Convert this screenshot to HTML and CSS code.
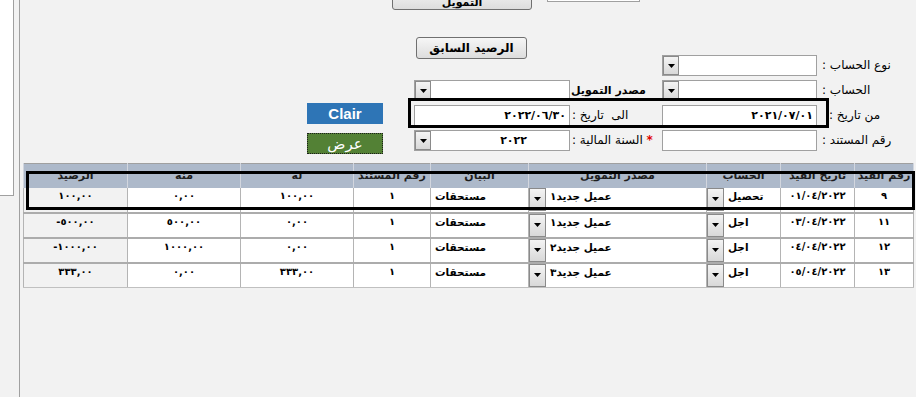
FILE: index.html
```html
<!DOCTYPE html>
<html lang="ar">
<head>
    <meta charset="UTF-8">
    <meta name="viewport" content="width=device-width, initial-scale=1.0">
    <title>كشف حساب التمويل</title>
    <link rel="stylesheet" href="styles.css">
</head>
<body>
    <div class="page">
        <div class="side"></div>
        <div class="main">
            <div class="top-bar">
                <button class="btn top-btn">التمويل</button>
                <div class="top-input"></div>
            </div>

            <div class="form" dir="rtl">
                <label class="lbl">نوع الحساب :</label>
                <div class="combo"><span class="cbtn"><svg width="7" height="4" viewBox="0 0 7 4"><path d="M0 0H7L3.5 4Z"/></svg></span><span class="cval"></span></div>
                <span></span>
                <button class="btn prev-btn">الرصيد السابق</button>
                <span></span>

                <label class="lbl">الحساب :</label>
                <div class="combo"><span class="cbtn"><svg width="7" height="4" viewBox="0 0 7 4"><path d="M0 0H7L3.5 4Z"/></svg></span><span class="cval"></span></div>
                <label class="lbl lbl2 lbl-bold">مصدر التمويل</label>
                <div class="combo"><span class="cbtn"><svg width="7" height="4" viewBox="0 0 7 4"><path d="M0 0H7L3.5 4Z"/></svg></span><span class="cval"></span></div>
                <span></span>

                <label class="lbl lbl-from">من تاريخ :</label>
                <div class="field date">٢٠٢١/٠٧/٠١</div>
                <label class="lbl lbl2">الى&nbsp; تاريخ :</label>
                <div class="field date">٢٠٢٢/٠٦/٣٠</div>
                <button class="btn-clair">Clair</button>

                <label class="lbl">رقم المستند :</label>
                <div class="field"></div>
                <label class="lbl lbl2"><span class="req">*</span> السنة المالية :</label>
                <div class="combo"><span class="cbtn"><svg width="7" height="4" viewBox="0 0 7 4"><path d="M0 0H7L3.5 4Z"/></svg></span><span class="cval year">٢٠٢٢</span></div>
                <button class="btn-show">عرض</button>

                <div class="mark mark-dates"></div>
            </div>

            <div class="grid-wrap">
                <table dir="rtl">
                    <colgroup>
                        <col style="width:59px">
                        <col style="width:74px">
                        <col style="width:74px">
                        <col style="width:178px">
                        <col style="width:98px">
                        <col style="width:77px">
                        <col style="width:113px">
                        <col style="width:113px">
                        <col style="width:104px">
                    </colgroup>
                    <thead>
                        <tr>
                            <th>رقم القيد</th>
                            <th>تاريخ القيد</th>
                            <th>الحساب</th>
                            <th>مصدر التمويل</th>
                            <th>البيان</th>
                            <th>رقم المستند</th>
                            <th>له</th>
                            <th>منه</th>
                            <th>الرصيد</th>
                        </tr>
                    </thead>
                    <tbody>
                        <tr>
                            <td class="num">٩</td>
                            <td class="num">٠١/٠٤/٢٠٢٢</td>
                            <td class="pick"><div class="cell-combo"><span class="cbtn"><svg width="7" height="4" viewBox="0 0 7 4"><path d="M0 0H7L3.5 4Z"/></svg></span><span class="ctext">تحصيل</span></div></td>
                            <td class="pick"><div class="cell-combo"><span class="cbtn"><svg width="7" height="4" viewBox="0 0 7 4"><path d="M0 0H7L3.5 4Z"/></svg></span><span class="ctext">عميل جديد١</span></div></td>
                            <td class="desc">مستحقات</td>
                            <td class="num">١</td>
                            <td class="num">١٠٠,٠٠</td>
                            <td class="num">٠,٠٠</td>
                            <td class="num bal">١٠٠,٠٠</td>
                        </tr>
                        <tr>
                            <td class="num">١١</td>
                            <td class="num">٠٣/٠٤/٢٠٢٢</td>
                            <td class="pick"><div class="cell-combo"><span class="cbtn"><svg width="7" height="4" viewBox="0 0 7 4"><path d="M0 0H7L3.5 4Z"/></svg></span><span class="ctext">اجل</span></div></td>
                            <td class="pick"><div class="cell-combo"><span class="cbtn"><svg width="7" height="4" viewBox="0 0 7 4"><path d="M0 0H7L3.5 4Z"/></svg></span><span class="ctext">عميل جديد١</span></div></td>
                            <td class="desc">مستحقات</td>
                            <td class="num">١</td>
                            <td class="num">٠,٠٠</td>
                            <td class="num">٥٠٠,٠٠</td>
                            <td class="num bal"><bdi dir="ltr">-٥٠٠,٠٠</bdi></td>
                        </tr>
                        <tr>
                            <td class="num">١٢</td>
                            <td class="num">٠٤/٠٤/٢٠٢٢</td>
                            <td class="pick"><div class="cell-combo"><span class="cbtn"><svg width="7" height="4" viewBox="0 0 7 4"><path d="M0 0H7L3.5 4Z"/></svg></span><span class="ctext">اجل</span></div></td>
                            <td class="pick"><div class="cell-combo"><span class="cbtn"><svg width="7" height="4" viewBox="0 0 7 4"><path d="M0 0H7L3.5 4Z"/></svg></span><span class="ctext">عميل جديد٢</span></div></td>
                            <td class="desc">مستحقات</td>
                            <td class="num">١</td>
                            <td class="num">٠,٠٠</td>
                            <td class="num">١٠٠٠,٠٠</td>
                            <td class="num bal"><bdi dir="ltr">-١٠٠٠,٠٠</bdi></td>
                        </tr>
                        <tr>
                            <td class="num">١٣</td>
                            <td class="num">٠٥/٠٤/٢٠٢٢</td>
                            <td class="pick"><div class="cell-combo"><span class="cbtn"><svg width="7" height="4" viewBox="0 0 7 4"><path d="M0 0H7L3.5 4Z"/></svg></span><span class="ctext">اجل</span></div></td>
                            <td class="pick"><div class="cell-combo"><span class="cbtn"><svg width="7" height="4" viewBox="0 0 7 4"><path d="M0 0H7L3.5 4Z"/></svg></span><span class="ctext">عميل جديد٣</span></div></td>
                            <td class="desc">مستحقات</td>
                            <td class="num">١</td>
                            <td class="num">٣٣٣,٠٠</td>
                            <td class="num">٠,٠٠</td>
                            <td class="num bal">٣٣٣,٠٠</td>
                        </tr>
                    </tbody>
                </table>
                <div class="mark mark-row"></div>
            </div>
        </div>
    </div>
</body>
</html>
```

FILE: styles.css
```css
* {
    box-sizing: border-box;
}
body {
    margin: 0;
    background: #f2f2f2;
    font-family: "DejaVu Sans", sans-serif;
    color: #000;
    overflow: hidden;
}
.page {
    display: flex;
    height: 397px;
}
.side {
    flex: none;
    width: 14px;
    height: 196px;
    background: #fff;
    border-right: 1px solid #a0a0a0;
    border-bottom: 1px solid #a0a0a0;
}
.main {
    flex: 1;
    margin-left: 5px;
    border-left: 1px solid #a0a0a0;
}

/* top strip, scrolled half out of view */
.top-bar {
    display: flex;
    align-items: flex-end;
    height: 10px;
    padding-left: 372px;
}
.btn {
    font-family: "DejaVu Sans", sans-serif;
    font-size: 11px;
    font-weight: bold;
    color: #000;
    background: linear-gradient(#f6f6f6, #dddddd);
    border: 1px solid #707070;
    border-radius: 3px;
    padding: 0;
}
.top-btn {
    width: 140px;
    height: 22px;
    flex: none;
    padding-top: 6px;
}
.top-input {
    width: 93px;
    height: 20px;
    margin-left: 15px;
    margin-bottom: 8px;
    background: #fff;
    border: 1px solid #a0a0a0;
}

/* filter form */
.form {
    position: relative;
    display: grid;
    grid-template-columns: 80px 155px 92px 156px 107px;
    grid-template-rows: repeat(4, 21px);
    row-gap: 4px;
    margin: 45px 19px 0 0;
}
.lbl {
    font-size: 12px;
    line-height: 21px;
    text-align: left;
    padding-left: 5px;
    white-space: nowrap;
}
.lbl2 {
    padding-left: 2px;
}
.lbl-bold {
    font-size: 11px;
    font-weight: bold;
    padding-left: 1px;
}
.lbl-from {
    padding-left: 12px;
}
.req {
    color: #e00000;
    font-weight: bold;
}
.field,
.combo {
    background: #fff;
    border: 1px solid #a0a0a0;
    height: 21px;
}
.date {
    font-size: 11px;
    font-weight: bold;
    letter-spacing: 1.5px;
    line-height: 19px;
    padding-right: 3px;
    text-align: right;
}
.combo {
    display: flex;
    direction: ltr;
}
.cbtn {
    flex: none;
    width: 16px;
    height: 100%;
    display: flex;
    align-items: center;
    justify-content: center;
    background: linear-gradient(#f4f4f4, #d8d8d8);
    border: 1px solid #8a8a8a;
}
.cval {
    flex: 1;
    text-align: right;
}
.year {
    font-size: 11px;
    font-weight: bold;
    letter-spacing: 1.5px;
    line-height: 19px;
    padding-right: 42px;
}
.prev-btn {
    justify-self: end;
    width: 111px;
    height: 22px;
    margin: -18px 0 0 2px;
    font-size: 12px;
}
.btn-clair,
.btn-show {
    justify-self: start;
    width: 76px;
    height: 21px;
    margin-right: 31px;
    border: none;
    padding: 0;
    color: #fff;
}
.btn-clair {
    margin-top: -2px;
    background: #2e75b6;
    font-family: "Liberation Sans", Arial, sans-serif;
    font-size: 15px;
    font-weight: bold;
}
.btn-show {
    margin-top: 3px;
    background: #538135;
    border: 1px dotted #1c1c1c;
    font-family: "DejaVu Sans", sans-serif;
    font-size: 15px;
}

/* highlight frames drawn over the content */
.mark {
    position: absolute;
    border: 3px solid #000;
    pointer-events: none;
}
.mark-dates {
    top: 43px;
    right: 68px;
    width: 421px;
    height: 30px;
}

/* results grid */
.grid-wrap {
    position: relative;
    width: 890px;
    margin: 12px 0 0 3px;
}
table {
    width: 890px;
    border-collapse: collapse;
    table-layout: fixed;
    border: 1px solid #a0a0a0;
}
th {
    height: 24px;
    padding: 0;
    background: #adb9ca;
    border-left: 1px solid #d2d6de;
    border-right: 1px solid #d2d6de;
    font-size: 11px;
    font-weight: bold;
    color: #1e1e1e;
    white-space: nowrap;
    overflow: hidden;
}
td {
    height: 25px;
    padding: 2px 3px 0;
    background: #fff;
    border-left: 1px solid #b4b4b4;
    border-right: 1px solid #b4b4b4;
    border-bottom: 2px solid #acacac;
    font-size: 10.5px;
    font-weight: bold;
    text-align: center;
    vertical-align: top;
    white-space: nowrap;
}
td.num {
    font-size: 10px;
    letter-spacing: 1px;
}
tbody tr:last-child td {
    border-bottom: 1px solid #c0c0c0;
}
td.bal {
    background: #f2f2f2;
}
td.desc {
    text-align: left;
    padding-left: 4px;
}
td.pick {
    padding: 0;
}
.cell-combo {
    display: flex;
    direction: ltr;
    height: 23px;
}
.cell-combo .cbtn {
    width: 17px;
}
.ctext {
    padding: 2px 0 0 4px;
}
.mark-row {
    top: 8px;
    left: 3px;
    width: 889px;
    height: 39px;
}
```
